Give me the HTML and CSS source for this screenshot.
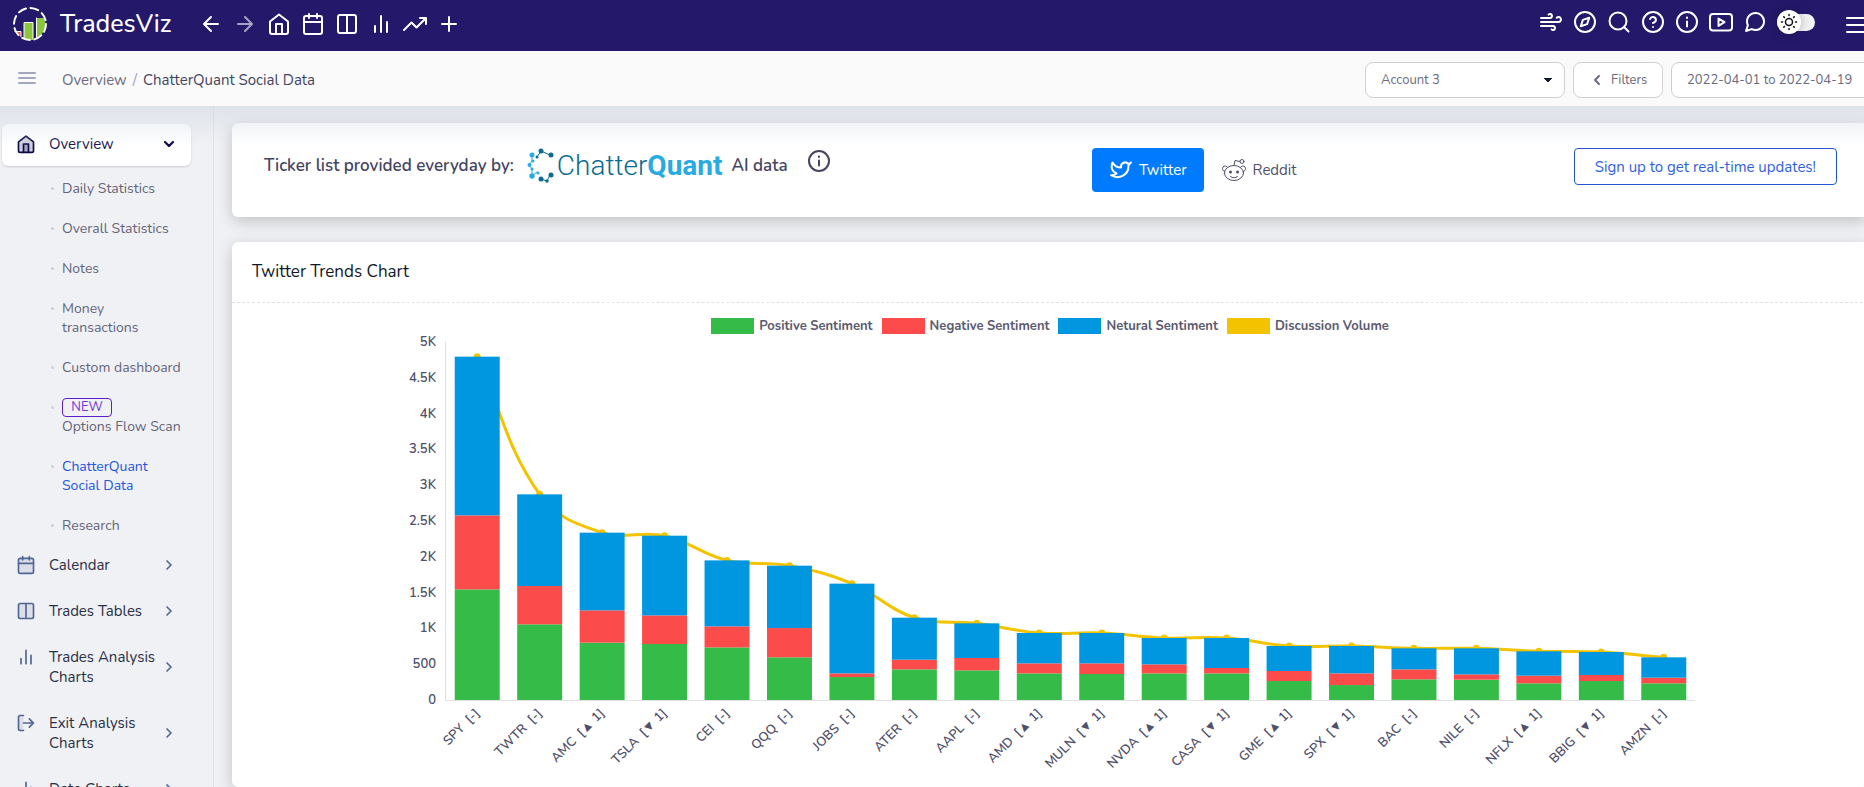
FILE: index.html
```html
<!DOCTYPE html>
<html lang="en">
<head>
    <meta charset="UTF-8">
    <meta name="viewport" content="width=device-width, initial-scale=1.0">
    <title>ChatterQuant Social Data</title>
    <link rel="stylesheet" href="styles.css">
</head>
<body>
    <!-- shared icons -->
    <svg class="sprite" aria-hidden="true">
        <symbol id="home" viewBox="0 0 24 24"><path d="M3 9.5 12 2.500l9 7V20a2 2 0 0 1-2 2H5a2 2 0 0 1-2-2z"/><path d="M9 22V12h6v10"/></symbol>
        <symbol id="calendar" viewBox="0 0 24 24"><rect x="3" y="4" width="18" height="18" rx="2"/><path d="M16 2v4M8 2v4M3 10h18"/></symbol>
        <symbol id="columns" viewBox="0 0 24 24"><path d="M12 3h7a2 2 0 0 1 2 2v14a2 2 0 0 1-2 2H5a2 2 0 0 1-2-2V5a2 2 0 0 1 2-2zM12 3v18"/></symbol>
        <symbol id="bars" viewBox="0 0 24 24"><path d="M18 20V10M12 20V4M6 20v-6"/></symbol>
        <symbol id="exit" viewBox="0 0 24 24"><path d="M9 21H5a2 2 0 0 1-2-2V5a2 2 0 0 1 2-2h4"/><path d="m16 17 5-5-5-5M21 12H9"/></symbol>
        <symbol id="menu" viewBox="0 0 24 24"><path d="M4 6h16M4 11h16M4 16h16"/></symbol>
        <symbol id="right" viewBox="0 0 24 24"><path d="m9 18 6-6-6-6"/></symbol>
        <symbol id="info" viewBox="0 0 24 24"><circle cx="12" cy="12" r="10"/><path d="M12 16.500v-5M12 7.500v.5"/></symbol>
    </svg>

    <header class="topbar">
        <a class="brand" href="#">
            <svg class="logo" viewBox="0 0 36 36">
                <path d="M4 26h5v5z" fill="#e8505b"/>
                <path d="M12 17h9v17h-6l-3-1z" fill="#8cc63f"/>
                <path d="M25 12h7l2 8-4 8-5 4z" fill="#8cc63f"/>
                <path d="M12 32V16.500h9V33M24.500 32V12M3 25.500h6v5" fill="none" stroke="#fff" stroke-width="1"/>
                <circle cx="18" cy="18" r="16" fill="none" stroke="#fff" stroke-width="2" stroke-dasharray="8 4.570"/>
            </svg>
            <span>TradesViz</span>
        </a>
        <nav class="icons">
            <button aria-label="Back"><svg><path d="M19 12H5M12 19l-7-7 7-7"/></svg></button>
            <button aria-label="Forward" class="off"><svg><path d="M5 12h14M12 5l7 7-7 7"/></svg></button>
            <button aria-label="Home"><svg><use href="#home"/></svg></button>
            <button aria-label="Calendar"><svg><use href="#calendar"/></svg></button>
            <button aria-label="Tables"><svg><use href="#columns"/></svg></button>
            <button aria-label="Charts"><svg><use href="#bars"/></svg></button>
            <button aria-label="Trends"><svg><path d="m23 6-9.500 9.500-5-5L1 18M17 6h6v6"/></svg></button>
            <button aria-label="Add"><svg><path d="M12 5v14M5 12h14"/></svg></button>
        </nav>
        <nav class="icons tools">
            <button aria-label="What's new"><svg><path d="M9.590 4.590A2 2 0 1 1 11 8H2m10.590 11.410A2 2 0 1 0 14 16H2m15.730-8.270A2.500 2.500 0 1 1 19.500 12H2"/></svg></button>
            <button aria-label="Explore"><svg><circle cx="12" cy="12" r="10"/><path d="m16.240 7.760-2.120 6.360-6.360 2.120 2.120-6.360z"/></svg></button>
            <button aria-label="Search"><svg><circle cx="11" cy="11" r="8.500"/><path d="m21.500 21.500-4.500-4.500"/></svg></button>
            <button aria-label="Help"><svg><circle cx="12" cy="12" r="10"/><path d="M9.090 9a3 3 0 0 1 5.830 1c0 2-3 3-3 3M12 17h.01"/></svg></button>
            <button aria-label="Info"><svg><use href="#info"/></svg></button>
            <button aria-label="Videos"><svg><rect x="1" y="4" width="22" height="16.500" rx="3"/><path d="m9.500 8.500 6 3.700-6 3.700z"/></svg></button>
            <button aria-label="Chat"><svg><path d="M21 11.500a8.380 8.380 0 0 1-.9 3.800 8.500 8.500 0 0 1-7.600 4.700 8.380 8.380 0 0 1-3.800-.9L3 21l1.900-5.700a8.380 8.380 0 0 1-.9-3.800 8.500 8.500 0 0 1 4.700-7.600 8.380 8.380 0 0 1 3.800-.9h.5a8.480 8.480 0 0 1 8 8z"/></svg></button>
            <label class="theme">
                <input type="checkbox" aria-label="Dark mode">
                <span class="knob"><svg><circle cx="12" cy="12" r="3.500"/><path d="M12 4.500v1M12 18.500v1M4.500 12h1M18.500 12h1M6.700 6.700l.7.7M16.600 16.600l.7.7M6.700 17.300l.7-.7M16.600 7.400l.7-.7"/></svg></span>
            </label>
            <button aria-label="Menu" class="more"><svg><path d="M2 5h20M2 12h20M2 19h20"/></svg></button>
        </nav>
    </header>

    <div class="subbar">
        <button class="burger" aria-label="Toggle sidebar"><svg><use href="#menu"/></svg></button>
        <div class="crumbs"><a href="#">Overview</a><i>/</i><span>ChatterQuant Social Data</span></div>
        <div class="filters">
            <select class="box account" aria-label="Account"><option>Account 3</option></select>
            <button class="box filter"><svg viewBox="0 0 24 24"><path d="m15 18-6-6 6-6"/></svg>Filters</button>
            <input class="box dates" type="text" aria-label="Date range" value="2022-04-01 to 2022-04-19">
        </div>
    </div>

    <div class="page">
        <aside class="sidebar">
            <a class="item open" href="#"><svg><use href="#home"/></svg><span>Overview</span><svg class="arrow down"><use href="#right"/></svg></a>
            <ul class="sub">
                <li><a href="#">Daily Statistics</a></li>
                <li><a href="#">Overall Statistics</a></li>
                <li><a href="#">Notes</a></li>
                <li><a href="#">Money<br>transactions</a></li>
                <li><a href="#">Custom dashboard</a></li>
                <li><a href="#"><b>NEW</b><br>Options Flow Scan</a></li>
                <li class="active"><a href="#">ChatterQuant<br>Social Data</a></li>
                <li><a href="#">Research</a></li>
            </ul>
            <a class="item" href="#"><svg><use href="#calendar"/></svg><span>Calendar</span><svg class="arrow"><use href="#right"/></svg></a>
            <a class="item" href="#"><svg><use href="#columns"/></svg><span>Trades Tables</span><svg class="arrow"><use href="#right"/></svg></a>
            <a class="item" href="#"><svg><use href="#bars"/></svg><span>Trades Analysis Charts</span><svg class="arrow"><use href="#right"/></svg></a>
            <a class="item" href="#"><svg><use href="#exit"/></svg><span>Exit Analysis Charts</span><svg class="arrow"><use href="#right"/></svg></a>
            <a class="item" href="#"><svg><use href="#bars"/></svg><span>Date Charts</span><svg class="arrow"><use href="#right"/></svg></a>
        </aside>

        <main class="main">
            <section class="card source">
                <div class="provider">
                    <span>Ticker list provided everyday by:</span>
                    <span class="cq">
                        <svg viewBox="0 0 30 36">
                            <path d="M5 7v6l-3 4 3 4v7l5-4" stroke="#29abe2"/>
                            <path d="m10 9 4-6 9 4M14 31l6 2 3-6" stroke="#0b6a8f"/>
                            <g fill="#29abe2"><circle cx="5" cy="7" r="2.500"/><circle cx="6" cy="13" r="1.500"/><circle cx="2.500" cy="17" r="2"/><circle cx="5" cy="21" r="1.500"/><circle cx="5" cy="28" r="2.700"/><circle cx="11" cy="25" r="1.500"/></g>
                            <g fill="#0b6a8f"><circle cx="10" cy="9" r="1.500"/><circle cx="14" cy="3" r="2.500"/><circle cx="24" cy="7" r="2.500"/><circle cx="14" cy="31" r="2.500"/><circle cx="20" cy="33" r="1.700"/><circle cx="24" cy="27" r="2.500"/></g>
                        </svg>
                        <span>Chatter<b>Quant</b></span>
                    </span>
                    <span>AI data</span>
                    <button class="about" aria-label="About this data"><svg><use href="#info"/></svg></button>
                </div>
                <div class="feeds">
                    <button class="feed on"><svg viewBox="0 0 24 24"><path d="M22 4.500c-1 .7-1.800 1-2.800 1.200a4.200 4.200 0 0 0-7.200 2.800v1C8.500 9.500 5.500 8 3.500 4.500c0 0-3.500 7.500 4 11-1.700 1.200-3.500 1.800-5.500 1.700 7.500 4.500 17.500.5 17.500-9.200 0-.3 0-.5-.1-.8.9-.8 1.700-1.700 2.600-2.700z"/></svg>Twitter</button>
                    <button class="feed"><svg class="reddit" viewBox="0 0 26 24"><ellipse cx="13" cy="15" rx="9.500" ry="7.500"/><path d="M3.700 13.500a2.800 2.800 0 1 1 3-4M22.300 13.500a2.800 2.800 0 1 0-3-4M13 7.500l1-5 5 1M9.500 18.500c2 1.700 5 1.700 7 0"/><circle cx="21" cy="3.500" r="2"/><circle class="eye" cx="9.500" cy="14" r="1.500"/><circle class="eye" cx="16.500" cy="14" r="1.500"/></svg>Reddit</button>
                    <button class="signup">Sign up to get real-time updates!</button>
                </div>
            </section>

            <section class="card trends">
                <h2>Twitter Trends Chart</h2>
                <ul class="legend">
                    <li class="pos">Positive Sentiment</li>
                    <li class="neg">Negative Sentiment</li>
                    <li class="neu">Netural Sentiment</li>
                    <li class="vol">Discussion Volume</li>
                </ul>
                <svg class="chart" id="chart" role="img" aria-label="Twitter Trends Chart"></svg>
            </section>
        </main>
    </div>
    <script src="chart.js"></script>
</body>
</html>
```

FILE: styles.css
```css
* {
    box-sizing: border-box;
}
body {
    margin: 0;
    height: 100vh;
    overflow: hidden;
    display: flex;
    flex-direction: column;
    background: #f0f1f4;
    color: #50506a;
    font-family: "Nunito", "Noto Sans", sans-serif;
    font-size: 13px;
}
a {
    color: inherit;
    text-decoration: none;
}
ul {
    list-style: none;
    margin: 0;
    padding: 0;
}
button, select, input {
    font: inherit;
    color: inherit;
    margin: 0;
}
button {
    background: none;
    border: 0;
    padding: 0;
}
svg {
    display: block;
    flex: none;
    width: 24px;
    height: 24px;
    fill: none;
    stroke: currentColor;
    stroke-width: 2;
    stroke-linecap: round;
    stroke-linejoin: round;
}
.sprite {
    display: none;
}

/* top bar */
.topbar {
    flex: none;
    display: flex;
    align-items: center;
    height: 51px;
    padding: 0 0 3px 12px;
    background: #24186b;
    color: #fff;
}
.brand {
    display: flex;
    align-items: center;
    gap: 12px;
    width: 187px;
    font-size: 25px;
    font-weight: 500;
    line-height: 32px;
}
.brand .logo {
    width: 36px;
    height: 36px;
    stroke: none;
}
.icons {
    display: flex;
    align-items: center;
    gap: 10px;
}
.icons .off {
    opacity: .6;
}
.tools {
    flex: none;
    margin-left: auto;
    padding-bottom: 4px;
}
.theme {
    display: flex;
    align-items: center;
    width: 38px;
    height: 17px;
    border-radius: 9px;
    background: #f4f4f6;
    margin-right: 20px;
}
.theme input {
    position: absolute;
    opacity: 0;
}
.knob {
    border-radius: 50%;
    background: #fff;
    color: #111;
    box-shadow: 0 0 12px rgba(0, 0, 0, .3);
}
.knob svg {
    stroke-width: 1.5;
}
.more {
    margin: 6px -5px 0 0;
}

/* breadcrumb bar */
.subbar {
    flex: none;
    display: flex;
    align-items: center;
    height: 55px;
    padding-left: 15px;
    background: #fafafa;
}
.burger {
    color: #a3a7c2;
    margin-right: 23px;
}
.crumbs {
    font-size: 15px;
    padding-top: 3px;
    color: #45455f;
}
.crumbs a {
    color: #6c6c80;
}
.crumbs i {
    font-style: normal;
    color: #9a9db5;
    margin: 0 6px;
}
.filters {
    flex: none;
    display: flex;
    gap: 8px;
    margin: 0 -16px 0 auto;
    padding-top: 2px;
}
.box {
    height: 36px;
    border: 1px solid #d0d0d4;
    border-radius: 8px;
    background: #fff;
    padding: 0 15px;
    color: #6a6a80;
}
.account {
    width: 200px;
    appearance: none;
    background: linear-gradient(to bottom right, #111b2b 50%, transparent 52%) no-repeat right 12px center / 4px 4px,
        linear-gradient(to bottom left, #111b2b 50%, transparent 52%) no-repeat right 16px center / 4px 4px #fff;
}
.filter {
    width: 90px;
    display: flex;
    align-items: center;
    gap: 6px;
}
.filter svg {
    width: 16px;
    height: 16px;
    stroke-width: 3;
}
.dates {
    width: 209px;
}

/* body */
.page {
    flex: 1;
    min-height: 0;
    display: flex;
    position: relative;
}
.page::before {
    content: "";
    position: absolute;
    z-index: 1;
    left: 0;
    right: 0;
    top: 0;
    height: 40px;
    background: linear-gradient(rgba(205, 213, 225, .5), rgba(205, 213, 225, 0));
    pointer-events: none;
}
.sidebar {
    flex: none;
    width: 214px;
    padding: 18px 22px 0 2px;
    border-right: 1px solid #dfe2ea;
}
.item {
    display: flex;
    align-items: flex-start;
    padding: 11px 14px;
    margin-bottom: 4px;
    font-size: 15px;
    line-height: 20px;
    color: #2b2f45;
}
.item span {
    flex: 1;
    margin-left: 13px;
}
.item svg {
    width: 20px;
    height: 20px;
    color: #506694;
    fill: rgba(80, 102, 148, .12);
}
.item .arrow {
    width: 16px;
    height: 16px;
    fill: none;
    align-self: center;
    stroke-width: 2.5;
}
.item .down {
    transform: rotate(90deg);
    stroke-width: 3.5;
}
.open {
    background: #fff;
    border-radius: 6px;
    padding: 10px 14px 12px;
    color: #1b1650;
    box-shadow: 0 1px 2px rgba(0, 0, 0, .15);
    margin-bottom: 3px;
}
.item.open svg {
    color: #0e0a4a;
}
.item.open svg:first-child {
    fill: rgba(14, 10, 74, .2);
}
.sub {
    padding-left: 60px;
    margin-bottom: -2px;
    font-size: 14px;
    line-height: 19px;
    color: #65657a;
    white-space: nowrap;
}
.sub li {
    position: relative;
    padding: 10px 0 11px;
}
.sub li::before {
    content: "";
    position: absolute;
    left: -11px;
    top: 18px;
    width: 3px;
    height: 3px;
    border-radius: 50%;
    background: #cfd0d8;
}
.sub b {
    display: inline-block;
    width: 50px;
    height: 19px;
    border: 1px solid #5b1fc8;
    border-radius: 4px;
    color: #7038d0;
    font-size: 13px;
    font-weight: 400;
    line-height: 17px;
    text-align: center;
    vertical-align: top;
}
.sub .active {
    color: #2455e0;
}

/* cards */
.main {
    flex: 1;
    min-width: 0;
    display: flex;
    flex-direction: column;
    gap: 25px;
    margin-right: -4px;
    padding: 17px 0 0 18px;
}
.card {
    background: #fff;
    border-radius: 6px;
    box-shadow: 0 4px 16px rgba(0, 0, 0, .2);
}
.source {
    flex: none;
    display: grid;
    grid-template-columns: 10fr 9fr;
    height: 94px;
    padding: 25px 31px 0 32px;
}
.provider {
    display: flex;
    align-items: center;
    gap: 9px;
    height: 35px;
    font-size: 17px;
    font-weight: 600;
    color: #45455f;
    white-space: nowrap;
}
.cq {
    display: flex;
    align-items: center;
    margin-left: 4px;
    font: 300 28px Roboto, sans-serif;
    color: #0b6a8f;
}
.cq svg {
    width: 30px;
    height: 36px;
    stroke-width: 1;
}
.cq g {
    stroke: none;
}
.cq b {
    color: #29abe2;
    font-weight: 700;
}
.about {
    margin: 0 0 10px 10px;
}
.feeds {
    display: flex;
    align-items: flex-start;
}
.feed {
    display: flex;
    align-items: center;
    gap: 6px;
    height: 44px;
    padding: 0 17px;
    border-radius: 4px;
    font-size: 15px;
    line-height: 20px;
}
.on {
    background: #007bff;
    color: #fff;
}
.reddit {
    width: 26px;
    stroke-width: 1;
}
.eye {
    fill: currentColor;
    stroke: none;
}
.signup {
    height: 37px;
    margin-left: auto;
    padding: 0 20px;
    border: 1px solid #2455d0;
    border-radius: 4px;
    color: #2f5fe0;
    font-size: 15px;
}
.trends {
    flex: 1;
}
.trends h2 {
    height: 61px;
    margin: 0;
    padding: 0 20px;
    border-bottom: 1px dashed #dfe2ea;
    color: #111827;
    font-size: 17px;
    font-weight: 400;
    line-height: 60px;
}
.legend {
    display: flex;
    justify-content: center;
    gap: 9px;
    padding-top: 15px;
    font-size: 13px;
    font-weight: 700;
    line-height: 16px;
    color: #5a5a70;
}
.legend li {
    display: flex;
    gap: 5px;
}
.legend li::before {
    content: "";
    width: 43px;
    height: 16px;
    background: #35bb47;
}
.legend .neg::before {
    background: #fb4b4b;
}
.legend .neu::before {
    background: #0096e0;
}
.legend .vol::before {
    background: #f4c300;
}

.chart {
    width: 80%;
    height: 450px;
    margin: 0 auto;
    overflow: visible;
    stroke: none;
}
.chart text {
    fill: #50506a;
    font-size: 13px;
    font-weight: 600;
    text-anchor: end;
}
.chart .axis {
    stroke: #e2e2e4;
    stroke-width: 1;
}
.chart .pos {
    fill: #35bb47;
}
.chart .neg {
    fill: #fb4b4b;
}
.chart .neu {
    fill: #0096e0;
}
.chart .dot {
    fill: #f4c300;
}
.chart .line {
    fill: none;
    stroke: #f4c300;
    stroke-width: 3;
}
```

FILE: chart.js
```js
// ticker, rank change, positive, positive + negative, total
var data = [
    ['SPY', '-', 1545, 2579, 4795],
    ['TWTR', '-', 1057, 1592, 2872],
    ['AMC', '▲ 1', 801, 1252, 2337],
    ['TSLA', '▼ 1', 782, 1182, 2295],
    ['CEI', '-', 735, 1029, 1950],
    ['QQQ', '-', 596, 1005, 1876],
    ['JOBS', '-', 321, 372, 1625],
    ['ATER', '-', 428, 563, 1150],
    ['AAPL', '-', 414, 587, 1071],
    ['AMD', '▲ 1', 372, 512, 936],
    ['MULN', '▼ 1', 363, 512, 936],
    ['NVDA', '▲ 1', 372, 498, 866],
    ['CASA', '▼ 1', 372, 447, 866],
    ['GME', '▲ 1', 265, 405, 754],
    ['SPX', '▼ 1', 209, 372, 754],
    ['BAC', '-', 289, 428, 722],
    ['NILE', '-', 284, 358, 722],
    ['NFLX', '▲ 1', 233, 340, 680],
    ['BBIG', '▼ 1', 265, 349, 670],
    ['AMZN', '-', 233, 312, 596]
];
var chart = document.getElementById('chart');
var left = 50, right = 10, top0 = 8, plotH = 358, max = 5000;

function y(v) {
    return top0 + plotH - v / max * plotH;
}

// smooth curve through the points, tension 0.4
function curve(p) {
    var d = 'M' + p[0].x + ' ' + p[0].y;
    var c = p.map(function(cur, i) {
        var a = p[i - 1] || cur, b = p[i + 1] || cur;
        var d1 = Math.hypot(cur.x - a.x, cur.y - a.y);
        var d2 = Math.hypot(b.x - cur.x, b.y - cur.y);
        var f1 = 0.4 * d1 / (d1 + d2), f2 = 0.4 * d2 / (d1 + d2);
        return {
            px: cur.x - f1 * (b.x - a.x), py: cur.y - f1 * (b.y - a.y),
            nx: cur.x + f2 * (b.x - a.x), ny: cur.y + f2 * (b.y - a.y)
        };
    });
    for (var i = 1; i < p.length; i++) {
        d += 'C' + [c[i - 1].nx, c[i - 1].ny, c[i].px, c[i].py, p[i].x, p[i].y].join(' ');
    }
    return d;
}

function rect(cls, x, w, from, to) {
    return '<rect class="' + cls + '" x="' + x + '" y="' + y(to) + '" width="' + w + '" height="' + (y(from) - y(to)) + '"/>';
}

function draw() {
    var w = chart.clientWidth || chart.getBoundingClientRect().width;
    var step = (w - left - right) / data.length;
    var barW = step * 0.72;
    var html = '', bars = '', dots = '', pts = [];

    for (var v = 0; v <= max; v += 500) {
        html += '<text x="' + (left - 10) + '" y="' + (y(v) + 4) + '">' + (v < 1000 ? v : v / 1000 + 'K') + '</text>';
    }
    data.forEach(function(row, i) {
        var cx = left + step * (i + 0.5), x = cx - barW / 2;
        pts.push({ x: cx, y: y(row[4]) });
        dots += '<circle class="dot" r="3.500" cx="' + cx + '" cy="' + y(row[4]) + '"/>';
        bars += rect('pos', x, barW, 0, row[2]) + rect('neg', x, barW, row[2], row[3]) + rect('neu', x, barW, row[3], row[4]);
        html += '<text transform="translate(' + (cx + 3) + ' ' + (y(0) + 14) + ') rotate(-45)">' + row[0] + '\u00a0\u00a0[' + row[1] + ']</text>';
    });
    html += '<path class="line" d="' + curve(pts) + '"/>' + dots + bars;
    html += '<path class="axis" d="M' + (left - .5) + ' ' + top0 + 'V' + (y(0) + .5) + 'H' + (w - right) + '"/>';
    chart.innerHTML = html;
}
draw();
window.addEventListener('resize', draw);
```
